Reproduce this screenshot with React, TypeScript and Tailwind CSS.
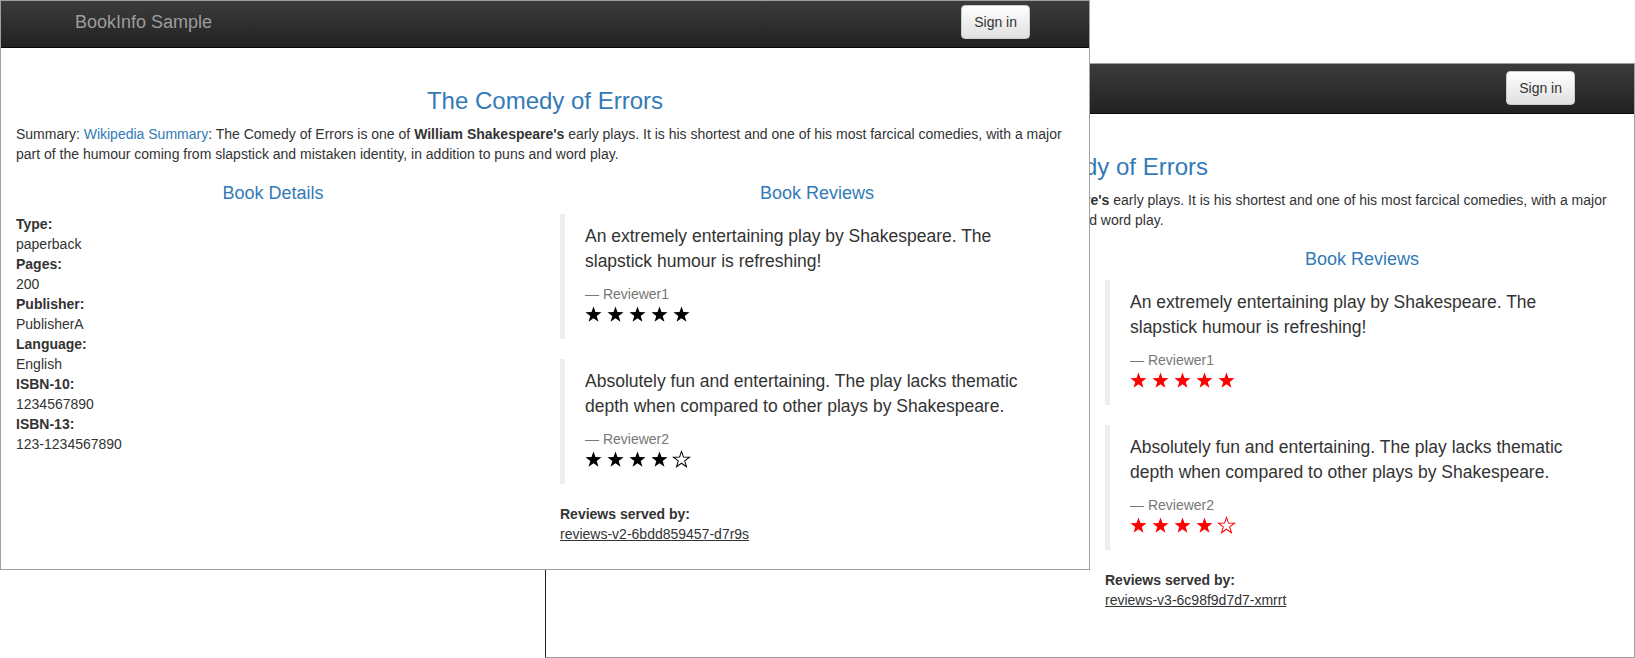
import React from "react";

type Review = { text: string; reviewer: string; stars: number };

const reviews: Review[] = [
  {
    text: "An extremely entertaining play by Shakespeare. The slapstick humour is refreshing!",
    reviewer: "Reviewer1",
    stars: 5,
  },
  {
    text: "Absolutely fun and entertaining. The play lacks thematic depth when compared to other plays by Shakespeare.",
    reviewer: "Reviewer2",
    stars: 4,
  },
];

const details = [
  ["Type:", "paperback"],
  ["Pages:", "200"],
  ["Publisher:", "PublisherA"],
  ["Language:", "English"],
  ["ISBN-10:", "1234567890"],
  ["ISBN-13:", "123-1234567890"],
];

// five point star, 20x19 box
const STAR =
  "M10 0.5L12.35 7.26L19.51 7.41L13.8 11.74L15.88 18.59L10 14.5L4.12 18.59L6.2 11.74L0.49 7.41L7.65 7.26Z";

function Star({ filled }: { filled: boolean }) {
  return (
    <svg viewBox="0 0 20 19" className="h-[16px] w-[17px] overflow-visible">
      <path
        d={STAR}
        fill={filled ? "currentColor" : "none"}
        stroke="currentColor"
        strokeWidth={filled ? 0 : 1.2}
      />
    </svg>
  );
}

type PageProps = {
  frame: string;
  navH: string;
  starColor: string;
  pod: string;
};

function ProductPage({ frame, navH, starColor, pod }: PageProps) {
  return (
    <div className={frame}>
      <nav className={`${navH} flex items-end border-b border-[#080808] bg-linear-to-b from-[#3c3c3c] to-[#222]`}>
        <div className="mx-auto flex w-[970px] items-end justify-between">
          <a className="mb-[15px] pl-[15px] text-[18px] leading-[20px] text-[#9d9d9d]">BookInfo Sample</a>
          <button className="mb-[8px] h-[34px] rounded-[4px] border border-[#ccc] bg-linear-to-b from-white to-[#e0e0e0] px-[12px] text-[14px] leading-[20px] text-[#333]">
            Sign in
          </button>
        </div>
      </nav>

      <div className="px-[15px]">
        <h3 className="mt-[40px] mb-[10px] text-center text-[24px] leading-[26px] text-[#337ab7]">
          The Comedy of Errors
        </h3>
        <p className="mb-[10px] text-[14px] leading-[20px]">
          Summary: <a className="text-[#337ab7]">Wikipedia Summary</a>: The Comedy of Errors is one of{" "}
          <b>William Shakespeare's</b> early plays. It is his shortest and one of his most farcical comedies, with a
          major part of the humour coming from slapstick and mistaken identity, in addition to puns and word play.
        </p>

        <div className="-mx-[15px] grid grid-cols-2">
          <div className="px-[15px]">
            <h4 className="mt-[9px] mb-[11px] text-center text-[18px] leading-[20px] text-[#337ab7]">Book Details</h4>
            <dl className="text-[14px] leading-[20px]">
              {details.map(([k, v]) => (
                <React.Fragment key={k}>
                  <dt className="font-bold">{k}</dt>
                  <dd>{v}</dd>
                </React.Fragment>
              ))}
            </dl>
          </div>

          <div className="px-[15px]">
            <h4 className="mt-[9px] mb-[11px] text-center text-[18px] leading-[20px] text-[#337ab7]">Book Reviews</h4>
            {reviews.map((r) => (
              <blockquote key={r.reviewer} className="mb-[20px] border-l-[5px] border-[#eee] px-[20px] py-[10px]">
                <p className="mb-[10px] text-[17.5px] leading-[25px]">{r.text}</p>
                <div className="text-[14px] leading-[20px] text-[#777]">— {r.reviewer}</div>
                <div className={`flex h-[25px] items-start gap-[5px] pt-[2px] ${starColor}`}>
                  {[0, 1, 2, 3, 4].map((i) => (
                    <Star key={i} filled={i < r.stars} />
                  ))}
                </div>
              </blockquote>
            ))}
            <dl className="text-[14px] leading-[20px]">
              <dt className="font-bold">Reviews served by:</dt>
              <u>{pod}</u>
            </dl>
          </div>
        </div>
      </div>
    </div>
  );
}

export default function App() {
  return (
    <div className="relative h-[658px] w-[1635px] overflow-hidden bg-white font-['Liberation_Sans',Arial,sans-serif] text-[#333]">
      <ProductPage
        frame="absolute left-[545px] top-[63px] h-[595px] w-[1090px] overflow-hidden border border-[#a0a0a0] border-l-[#222] bg-white"
        navH="h-[50px]"
        starColor="text-[#ff0000]"
        pod="reviews-v3-6c98f9d7d7-xmrrt"
      />
      <ProductPage
        frame="absolute left-0 top-0 z-10 h-[570px] w-[1090px] overflow-hidden border border-[#a0a0a0] bg-white"
        navH="h-[47px]"
        starColor="text-black"
        pod="reviews-v2-6bdd859457-d7r9s"
      />
    </div>
  );
}
